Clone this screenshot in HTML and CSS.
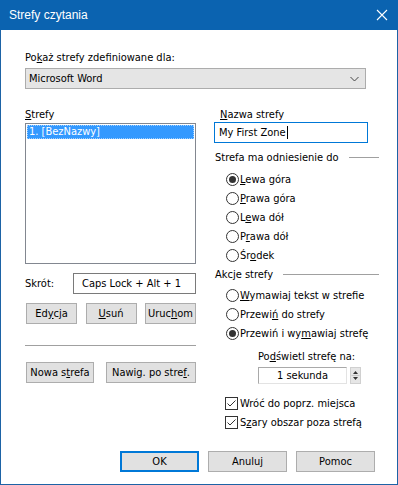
FILE: index.html
```html
<!DOCTYPE html>
<html lang="pl">
<head>
<meta charset="utf-8">
<title>Strefy czytania</title>
<link rel="stylesheet" href="styles.css">
</head>
<body>
<div class="window">
  <div class="titlebar">
    <span class="title">Strefy czytania</span>
    <svg class="close" width="12" height="12" viewBox="0 0 12 12"><path d="M1 1 L11 11 M11 1 L1 11" stroke="#fff" stroke-width="1.1" fill="none"/></svg>
  </div>
  <div class="content">
    <div class="label">Po<u>k</u>aż strefy zdefiniowane dla:</div>
    <div class="combo">
      <span>Microsoft Word</span>
      <svg class="chev" width="9" height="6" viewBox="0 0 9 6"><path d="M0.5 1 L4.5 5 L8.5 1" stroke="#444" stroke-width="1" fill="none"/></svg>
    </div>
    <div class="cols">
      <div class="left">
        <div class="label"><u>S</u>trefy</div>
        <div class="list">
          <div class="item sel">1. [BezNazwy]</div>
        </div>
        <div class="shortcut">
          <span class="sc-label">Skrót:</span>
          <div class="textbox sc-box">Caps Lock + Alt + 1</div>
        </div>
        <div class="btnrow three">
          <button class="btn w51">Ed<u>y</u>cja</button>
          <button class="btn w51"><u>U</u>suń</button>
          <button class="btn w51">Uruc<u>h</u>om</button>
        </div>
        <div class="hr"></div>
        <div class="btnrow two">
          <button class="btn w68">Nowa s<u>t</u>refa</button>
          <button class="btn w90">Nawig. po stre<u>f</u>.</button>
        </div>
      </div>
      <div class="right">
        <div class="label indent"><u>N</u>azwa strefy</div>
        <div class="textbox focus">My First Zone<span class="caret"></span></div>
        <div class="sect s1">Strefa ma odniesienie do</div>
        <div class="group g1">
          <div class="opt"><span class="radio on"></span><span><u>L</u>ewa góra</span></div>
          <div class="opt"><span class="radio"></span><span><u>P</u>rawa góra</span></div>
          <div class="opt"><span class="radio"></span><span>L<u>e</u>wa dół</span></div>
          <div class="opt"><span class="radio"></span><span>P<u>r</u>awa dół</span></div>
          <div class="opt"><span class="radio"></span><span>Śr<u>o</u>dek</span></div>
        </div>
        <div class="sect s2">Akcje strefy</div>
        <div class="group g2">
          <div class="opt"><span class="radio"></span><span><u>W</u>ymawiaj tekst w strefie</span></div>
          <div class="opt"><span class="radio"></span><span>Przewi<u>ń</u> do strefy</span></div>
          <div class="opt"><span class="radio on"></span><span>Przewiń i wy<u>m</u>awiaj strefę</span></div>
        </div>
        <div class="label sub">Po<u>d</u>świetl strefę na:</div>
        <div class="spinrow">
          <div class="spinbox">1 sekunda</div>
          <div class="spin">
            <svg width="11" height="17" viewBox="0 0 11 17"><path d="M5.5 4 L8 7 L3 7 Z" fill="#333"/><path d="M1.5 8.5 H9.5" stroke="#c8c8c8" stroke-width="1"/><path d="M3 10 L8 10 L5.5 13 Z" fill="#333"/></svg>
          </div>
        </div>
        <div class="group g3">
          <div class="opt chk"><span class="check"><svg width="11" height="11" viewBox="0 0 11 11"><path d="M1.5 5.5 L4 8 L9.5 2.5" stroke="#333" stroke-width="1" fill="none"/></svg></span><span>Wróć do poprz. mie<u>j</u>sca</span></div>
          <div class="opt chk"><span class="check"><svg width="11" height="11" viewBox="0 0 11 11"><path d="M1.5 5.5 L4 8 L9.5 2.5" stroke="#333" stroke-width="1" fill="none"/></svg></span><span>S<u>z</u>ary obszar poza strefą</span></div>
        </div>
      </div>
    </div>
    <div class="footer">
      <button class="btn fbtn default">OK</button>
      <button class="btn fbtn">Anuluj</button>
      <button class="btn fbtn">Pomoc</button>
    </div>
  </div>
</div>
</body>
</html>
```
FILE: styles.css
```css
* { box-sizing: border-box; }
html, body { margin: 0; padding: 0; background: #fff; }
body {
  font-family: "DejaVu Sans Condensed", "Liberation Sans", Arial, sans-serif;
  font-size: 11px;
  color: #000;
}
u { text-decoration: underline; text-underline-offset: 1px; }

.window {
  width: 398px;
  height: 485px;
  border: 1px solid #1d63a6;
  border-top: none;
  display: flex;
  flex-direction: column;
  background: #fff;
}

.titlebar {
  height: 30px;
  margin: 0 -1px;
  background: #0b63b0;
  color: #fff;
  display: flex;
  align-items: center;
  padding: 0 10px 0 9px;
}
.title { font-family: "Liberation Sans", Arial, sans-serif; font-size: 12px; flex: 1; }
.close { display: block; margin-top: 0; }

.content {
  flex: 1;
  display: flex;
  flex-direction: column;
  padding: 21px 18px 12px 24px;
}

.label { line-height: 13px; height: 13px; white-space: nowrap; }
.content > .label { margin-bottom: 4px; }

.combo {
  width: 341px;
  height: 21px;
  background: #e5e5e5;
  border: 1px solid #acacac;
  display: flex;
  align-items: center;
  padding: 0 6px 0 3px;
}
.combo span { flex: 1; }

.cols {
  display: flex;
  gap: 18px;
  margin-top: 19px;
}
.left { width: 171px; display: flex; flex-direction: column; }
.right { width: 165px; display: flex; flex-direction: column; }

.left > .label { margin-bottom: 2px; }
.list {
  height: 141px;
  border: 1px solid #828790;
  padding: 1px;
}
.item { height: 14px; line-height: 14px; padding-left: 2px; }
.item.sel { background: #3399ff; color: #fff; outline: 1px dotted #9fd0ff; outline-offset: -1px; }

.shortcut { display: flex; align-items: center; margin-top: 9px; }
.sc-label { width: 48px; }
.textbox {
  height: 21px;
  border: 1px solid #7a7a7a;
  display: flex;
  align-items: center;
  padding-left: 4px;
  background: #fff;
}
.sc-box { width: 123px; padding-left: 8px; }

.btn {
  font: inherit;
  color: #000;
  height: 21px;
  background: #e1e1e1;
  border: 1px solid #adadad;
  padding: 0;
  margin: 0;
  display: flex;
  align-items: center;
  justify-content: center;
}
.btnrow { display: flex; }
.three { margin-top: 9px; padding-left: 1px; justify-content: space-between; }
.two { padding-left: 1px; justify-content: space-between; }
.w51 { width: 51px; }
.w68 { width: 68px; }
.w90 { width: 90px; }

.hr { height: 1px; background: #a0a0a0; margin: 21px 0 16px; }

.right > .label.indent { padding-left: 6px; margin-bottom: 1px; }
.textbox.focus { width: 154px; border-color: #0078d7; }
.caret { display: inline-block; width: 1px; height: 13px; background: #000; margin-left: 1px; }

.sect {
  display: flex;
  align-items: center;
  gap: 10px;
  line-height: 13px;
  padding-left: 1px;
  white-space: nowrap;
}
.sect::after { content: ""; flex: 1; height: 1px; background: #a0a0a0; }
.s1 { margin-top: 8px; }
.s2 { margin-top: 3px; }

.group { display: flex; flex-direction: column; }
.g1 { margin-top: 6px; }
.g2 { margin-top: 5px; }
.g3 { margin-top: 10px; }
.opt { height: 19px; display: flex; align-items: center; gap: 1px; padding-left: 12px; white-space: nowrap; }
.opt.chk { padding-left: 11px; gap: 2px; }

.radio {
  width: 13px;
  height: 13px;
  border: 1px solid #333;
  border-radius: 50%;
  background: #fff;
  display: flex;
  align-items: center;
  justify-content: center;
  flex: none;
}
.radio.on::after {
  content: "";
  width: 7px;
  height: 7px;
  border-radius: 50%;
  background: #333;
}
.check {
  width: 13px;
  height: 13px;
  border: 1px solid #333;
  background: #fff;
  display: flex;
  align-items: center;
  justify-content: center;
  flex: none;
}
.check svg { display: block; }

.label.sub { margin-top: 7px; padding-left: 44px; }
.spinrow { display: flex; gap: 3px; margin-top: 4px; padding-left: 44px; height: 17px; }
.spinbox {
  width: 89px;
  height: 17px;
  border: 1px solid #a9a9a9;
  border-right-color: #e3e3e3;
  border-bottom-color: #e3e3e3;
  display: flex;
  align-items: center;
  justify-content: center;
}
.spin { width: 11px; height: 17px; background: #e6e6e6; border: 1px solid #d0d0d0; position: relative; }
.spin svg { position: absolute; left: -1px; top: -1px; display: block; }

.footer {
  margin-top: auto;
  display: flex;
  justify-content: flex-end;
  gap: 9px;
  padding-right: 4px;
}
.fbtn { width: 79px; }
.fbtn.default { border: 2px solid #0078d7; }
```
